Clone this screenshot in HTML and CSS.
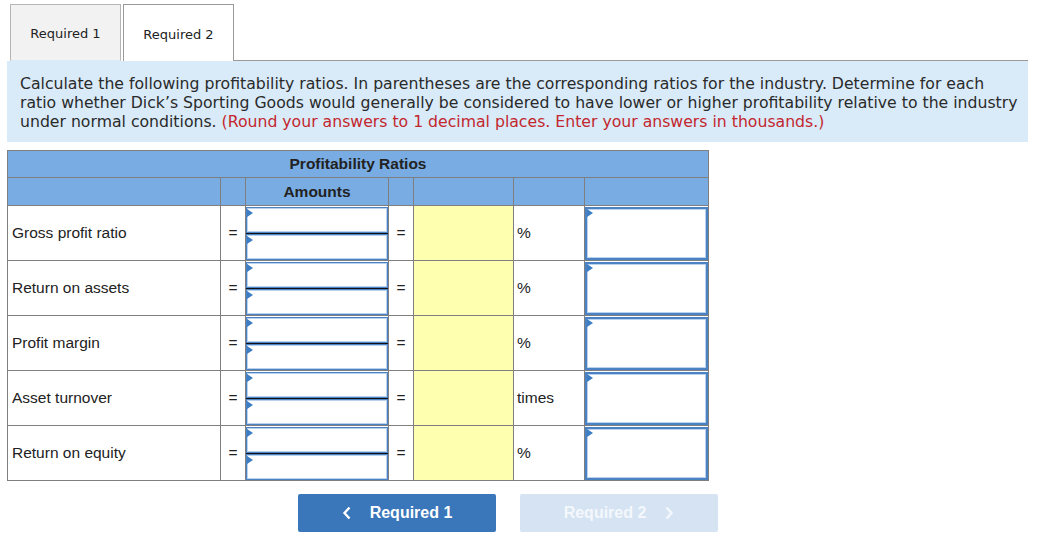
FILE: index.html
```html
<!DOCTYPE html>
<html>
<head>
<meta charset="utf-8">
<link rel="stylesheet" href="styles.css">
</head>
<body>
<div class="page">
  <div class="tabs">
    <div class="tab tab-inactive">Required 1</div>
    <div class="tab tab-active">Required 2</div>
    <div class="tab-fill"></div>
  </div>
  <div class="instructions">
    Calculate the following profitability ratios. In parentheses are the corresponding ratios for the industry. Determine for each ratio whether Dick’s Sporting Goods would generally be considered to have lower or higher profitability relative to the industry under normal conditions. <span class="red">(Round your answers to 1 decimal places. Enter your answers in thousands.)</span>
  </div>
  <table class="ratios">
    <colgroup>
      <col class="c-label"><col class="c-eq"><col class="c-frac"><col class="c-eq"><col class="c-res"><col class="c-unit"><col class="c-ans">
    </colgroup>
    <thead>
      <tr class="h1"><th colspan="7">Profitability Ratios</th></tr>
      <tr class="h2"><th></th><th></th><th>Amounts</th><th></th><th></th><th></th><th></th></tr>
    </thead>
    <tbody>
      <tr>
        <td class="label">Gross profit ratio</td><td class="eq">=</td>
        <td class="frac"><div class="frac-box"><div class="inp"><span class="mark"></span></div><div class="bar"></div><div class="inp"><span class="mark"></span></div></div></td>
        <td class="eq">=</td><td class="res"></td><td class="unit">%</td>
        <td class="ans"><div class="ans-box"><span class="mark"></span></div></td>
      </tr>
      <tr>
        <td class="label">Return on assets</td><td class="eq">=</td>
        <td class="frac"><div class="frac-box"><div class="inp"><span class="mark"></span></div><div class="bar"></div><div class="inp"><span class="mark"></span></div></div></td>
        <td class="eq">=</td><td class="res"></td><td class="unit">%</td>
        <td class="ans"><div class="ans-box"><span class="mark"></span></div></td>
      </tr>
      <tr>
        <td class="label">Profit margin</td><td class="eq">=</td>
        <td class="frac"><div class="frac-box"><div class="inp"><span class="mark"></span></div><div class="bar"></div><div class="inp"><span class="mark"></span></div></div></td>
        <td class="eq">=</td><td class="res"></td><td class="unit">%</td>
        <td class="ans"><div class="ans-box"><span class="mark"></span></div></td>
      </tr>
      <tr>
        <td class="label">Asset turnover</td><td class="eq">=</td>
        <td class="frac"><div class="frac-box"><div class="inp"><span class="mark"></span></div><div class="bar"></div><div class="inp"><span class="mark"></span></div></div></td>
        <td class="eq">=</td><td class="res"></td><td class="unit">times</td>
        <td class="ans"><div class="ans-box"><span class="mark"></span></div></td>
      </tr>
      <tr>
        <td class="label">Return on equity</td><td class="eq">=</td>
        <td class="frac"><div class="frac-box"><div class="inp"><span class="mark"></span></div><div class="bar"></div><div class="inp"><span class="mark"></span></div></div></td>
        <td class="eq">=</td><td class="res"></td><td class="unit">%</td>
        <td class="ans"><div class="ans-box"><span class="mark"></span></div></td>
      </tr>
    </tbody>
  </table>
  <div class="nav">
    <button class="btn btn-prev"><svg class="chev" width="10" height="14" viewBox="0 0 10 14"><path d="M7.5 1.5 L2.5 7 L7.5 12.5" fill="none" stroke="currentColor" stroke-width="2.4"/></svg>Required 1</button>
    <button class="btn btn-next">Required 2<svg class="chev chev-r" width="10" height="14" viewBox="0 0 10 14"><path d="M2.5 1.5 L7.5 7 L2.5 12.5" fill="none" stroke="currentColor" stroke-width="2.4"/></svg></button>
  </div>
</div>
</body>
</html>
```
FILE: styles.css
```css
html, body {
  margin: 0;
  padding: 0;
  background: #fff;
}
.page {
  padding: 4px 18px 0 7px;
  font-family: "DejaVu Sans", Verdana, sans-serif;
  color: #222;
}
.tabs {
  display: flex;
  align-items: flex-end;
  padding-left: 3px;
  height: 57px;
}
.tab {
  box-sizing: border-box;
  width: 111px;
  height: 57px;
  display: flex;
  align-items: center;
  justify-content: center;
  font-size: 13px;
  color: #222;
  border: 1px solid #b5b5b5;
  border-bottom: none;
  padding-top: 2px;
}
.tab-inactive {
  background: #f2f2f2;
  margin-right: 2px;
  border-bottom: 1px solid #d9ebf9;
}
.tab-active {
  background: #fff;
  border-color: #9a9a9a;
}
.tab-fill {
  flex: 1;
  border-bottom: 1px solid #9a9a9a;
}
.instructions {
  background: #d9ebf9;
  padding: 13px 6px 11px 13px;
  font-size: 15.7px;
  line-height: 19px;
  color: #2a2a2a;
}
.red {
  color: #c3262d;
}
.ratios {
  margin-top: 8px;
  border-collapse: collapse;
  table-layout: fixed;
  width: 701px;
  font-family: "Liberation Sans", Arial, sans-serif;
  font-size: 15.5px;
  color: #222;
}
.c-label { width: 213px; }
.c-eq { width: 25px; }
.c-frac { width: 143px; }
.c-res { width: 100px; }
.c-unit { width: 71px; }
.c-ans { width: 124px; }
.ratios th, .ratios td {
  border: 1px solid #7f7f7f;
  padding: 0;
}
.ratios th {
  background: #78ace3;
  font-weight: bold;
  color: #222;
}
.h1 th { height: 26px; }
.h2 th { height: 27px; }
.ratios tbody td { height: 54px; }
.label { padding-left: 4px !important; }
.eq { text-align: center; }
.unit { padding-left: 3px !important; }
.res { background: #ffffb0; }
.frac-box {
  display: flex;
  flex-direction: column;
  height: 53px;
}
.inp {
  position: relative;
  flex: 1;
  border: 1px solid #4a82c3;
  box-shadow: inset 0 0 0 1px #b9d2ee;
  background: #fff;
}
.bar {
  height: 1px;
  background: #111;
}
.mark {
  position: absolute;
  left: 0;
  top: 1px;
  width: 0;
  height: 0;
  border-top: 4px solid transparent;
  border-bottom: 4px solid transparent;
  border-left: 6px solid #3c7dc4;
}
.ans-box {
  position: relative;
  box-sizing: border-box;
  height: 53px;
  border: 2px solid #4a82c3;
  box-shadow: inset 0 0 0 1px #b9d2ee;
  background: #fff;
}
.ans-box .mark { top: 0; }
.nav {
  display: flex;
  gap: 24px;
  margin-top: 13px;
  padding-left: 291px;
}
.btn {
  width: 198px;
  height: 38px;
  border: none;
  border-radius: 2px;
  font-family: "Liberation Sans", Arial, sans-serif;
  font-weight: bold;
  font-size: 16px;
  color: #fff;
  display: flex;
  align-items: center;
  justify-content: center;
}
.btn-prev { background: #3a76ba; }
.btn-next { background: #d5e3f2; color: #f4f8fc; }
.chev {
  margin-right: 18px;
}
.chev-r { margin-right: 0; margin-left: 18px; }
```
